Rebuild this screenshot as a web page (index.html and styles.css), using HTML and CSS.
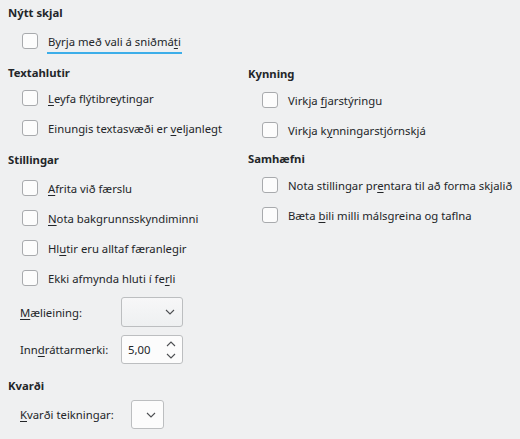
FILE: index.html
```html
<!DOCTYPE html>
<html lang="is">
<head>
    <meta charset="UTF-8">
    <title>Almennt</title>
    <link rel="stylesheet" href="styles.css">
</head>
<body>
    <section class="top">
        <h2 class="heading">Nýtt skjal</h2>
        <div class="check-row row-template">
            <span class="box"></span>
            <span class="label focused">Byrja með vali á sniðmá<u>t</u>i</span>
        </div>
    </section>

    <div class="columns">
        <div class="col col-left">
            <h2 class="heading">Textahlutir</h2>
            <div class="group group-first">
                <div class="check-row"><span class="box"></span><span class="label"><u>L</u>eyfa flýtibreytingar</span></div>
                <div class="check-row"><span class="box"></span><span class="label">Einungis textasvæði er <u>v</u>eljanlegt</span></div>
            </div>

            <h2 class="heading heading-stillingar">Stillingar</h2>
            <div class="group group-stillingar">
                <div class="check-row"><span class="box"></span><span class="label"><u>A</u>frita við færslu</span></div>
                <div class="check-row"><span class="box"></span><span class="label"><u>N</u>ota bakgrunnsskyndiminni</span></div>
                <div class="check-row"><span class="box"></span><span class="label">Hl<u>u</u>tir eru alltaf færanlegir</span></div>
                <div class="check-row"><span class="box"></span><span class="label">Ekki afmynda hluti í fe<u>r</u>li</span></div>
            </div>

            <div class="form-row row-unit">
                <span class="form-label"><u>M</u>ælieining:</span>
                <span class="combo combo-unit">
                    <svg width="10" height="6" viewBox="0 0 10 6"><path d="M1 1 L5 5 L9 1" fill="none" stroke="#4d4f52" stroke-width="1.1"/></svg>
                </span>
            </div>
            <div class="form-row row-tab">
                <span class="form-label">Inn<u>d</u>ráttarmerki:</span>
                <span class="spin">
                    <span class="spin-value">5,00</span>
                    <svg class="spin-arrows" width="10" height="20" viewBox="0 0 10 20"><path d="M1 6 L5 2 L9 6" fill="none" stroke="#4d4f52" stroke-width="1.1"/><path d="M1 14 L5 18 L9 14" fill="none" stroke="#4d4f52" stroke-width="1.1"/></svg>
                </span>
            </div>
        </div>

        <div class="col col-right">
            <h2 class="heading heading-kynning">Kynning</h2>
            <div class="group group-right">
                <div class="check-row"><span class="box"></span><span class="label">Virkja <u>f</u>jarstýringu</span></div>
                <div class="check-row"><span class="box"></span><span class="label">Virkja k<u>y</u>nningarstjórnskjá</span></div>
            </div>

            <h2 class="heading heading-samhaefni">Samhæfni</h2>
            <div class="group group-right">
                <div class="check-row"><span class="box"></span><span class="label">Nota stillingar pr<u>e</u>ntara til að forma skjalið</span></div>
                <div class="check-row"><span class="box"></span><span class="label">Bæta <u>b</u>ili milli málsgreina og taflna</span></div>
            </div>
        </div>
    </div>

    <section class="scale">
        <h2 class="heading">Kvarði</h2>
        <div class="form-row row-scale">
            <span class="form-label"><u>K</u>varði teikningar:</span>
            <span class="combo combo-scale">
                <svg width="10" height="6" viewBox="0 0 10 6"><path d="M1 1 L5 5 L9 1" fill="none" stroke="#4d4f52" stroke-width="1.1"/></svg>
            </span>
        </div>
    </section>
</body>
</html>
```

FILE: styles.css
```css
body {
    margin: 0;
    padding: 0;
    width: 520px;
    height: 439px;
    overflow: hidden;
    background-color: #eff0f1;
    color: #232629;
    font-family: "Noto Sans", sans-serif;
    font-size: 11.3px;
}

u {
    text-decoration-thickness: 1px;
    text-underline-offset: 2px;
}

.heading {
    margin: 0;
    height: 18px;
    line-height: 18px;
    font-size: 11.3px;
    font-weight: bold;
}

.top {
    padding: 4px 0 0 8px;
}

.row-template {
    margin-top: 4px;
}

.check-row {
    display: flex;
    align-items: center;
    height: 30px;
    padding-left: 14px;
}

.box {
    width: 14px;
    height: 14px;
    border: 1px solid #a8aaad;
    border-radius: 3px;
    background-color: #fcfcfc;
    flex-shrink: 0;
}

.label {
    margin-left: 10px;
    white-space: nowrap;
}

.focused {
    padding: 0 1px 3px 1px;
    margin-left: 9px;
    border-bottom: 2px solid #3daee9;
    margin-top: 5px;
}

.columns {
    display: flex;
    margin-top: 8px;
}

.col-left {
    flex-shrink: 0;
    width: 240px;
    padding-left: 8px;
}

.col-right {
    flex: 1;
    min-width: 0;
}

.group-first {
    margin-top: 1px;
}

.group-right {
    margin-top: 2px;
}

.heading-stillingar {
    margin-top: 8px;
}

.group-stillingar {
    margin-top: 4px;
}

.heading-kynning {
    margin-top: 1px;
}

.heading-samhaefni {
    margin-top: 5px;
}

.form-row {
    display: flex;
    align-items: center;
    padding-left: 12px;
}

.form-label {
    width: 101px;
    white-space: nowrap;
}

.row-unit {
    margin-top: 4px;
}

.row-tab {
    margin-top: 8px;
}

.combo {
    display: flex;
    align-items: center;
    justify-content: flex-end;
    box-sizing: border-box;
    border: 1px solid #bcbec0;
    border-radius: 3px;
    padding-right: 7px;
}

.combo-unit {
    width: 62px;
    height: 30px;
    background: linear-gradient(#f7f7f8, #eef0f1);
}

.spin {
    display: flex;
    align-items: center;
    justify-content: space-between;
    box-sizing: border-box;
    width: 62px;
    height: 29px;
    border: 1px solid #bcbec0;
    border-radius: 3px;
    background-color: #fcfcfc;
    padding: 0 6px 0 6px;
}

.scale {
    padding-left: 8px;
    margin-top: 13px;
}

.row-scale {
    margin-top: 5px;
}

.row-scale .form-label {
    width: 111px;
}

.combo-scale {
    width: 33px;
    height: 29px;
    background-color: #fcfcfc;
}
```
